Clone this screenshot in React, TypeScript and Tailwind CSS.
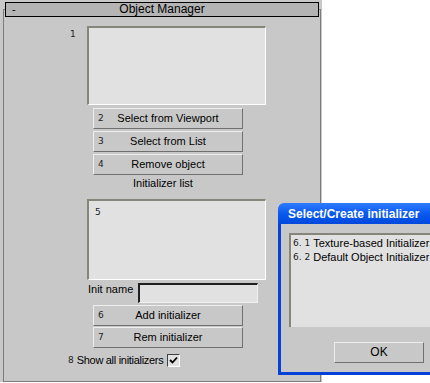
import React from 'react';

const btn =
  'relative flex h-[21px] w-[150px] items-center justify-center border border-t-[#eeeeee] border-l-[#eeeeee] border-b-[#707070] border-r-[#707070] bg-[#c8c8c8]';

function Mark({ children }: { children: React.ReactNode }) {
  return (
    <span className="font-['DejaVu_Sans',sans-serif] text-[9px] leading-none text-[#222]">
      {children}
    </span>
  );
}

function PanelButton({ num, label }: { num: string; label: string }) {
  return (
    <div className={`${btn} ml-[89px]`}>
      <span className="absolute left-[4px] top-0 flex h-full items-center">
        <Mark>{num}</Mark>
      </span>
      <span>{label}</span>
    </div>
  );
}

const listbox =
  'border-t-2 border-l-2 border-b border-r border-t-[#85857a] border-l-[#85857a] border-b-white border-r-white bg-[#e1e1e1]';

export default function App() {
  return (
    <div className="relative h-[383px] w-[430px] overflow-hidden bg-white font-['Liberation_Sans',Arial,sans-serif] text-[11px] leading-[13px] text-black">
      <div className="h-[382px] w-[322px] bg-[#c8c8c8] pl-[3px] pt-[9px]">
        <div className="flex h-[373px] w-[318px] flex-col border border-[#7c7c7c]">
          <div className="relative mx-[1px] -mt-[8px] flex h-[15px] items-center justify-center border border-black bg-[#b4b4b4]">
            <span className="absolute left-[6px] top-[0px]">-</span>
            <span className="text-[12px]">Object Manager</span>
          </div>

          <div className="ml-[66px] mt-[9px] flex">
            <div className="w-[17px] pt-[1px]">
              <Mark>1</Mark>
            </div>
            <div className={`${listbox} h-[79px] w-[179px]`} />
          </div>

          <div className="mt-[3px]">
            <PanelButton num="2" label="Select from Viewport" />
          </div>
          <div className="mt-[2px]">
            <PanelButton num="3" label="Select from List" />
          </div>
          <div className="mt-[2px]">
            <PanelButton num="4" label="Remove object" />
          </div>
          <div className="ml-[129px] mt-[2px]">Initializer list</div>

          <div className={`${listbox} ml-[83px] mt-[9px] h-[81px] w-[179px] pl-[6px] pt-[4px]`}>
            <Mark>5</Mark>
          </div>

          <div className="ml-[84px] mt-[3px] flex items-start">
            <span className="w-[50px]">Init name</span>
            <div className="h-[20px] w-[120px] border-t-2 border-l-2 border-b border-r border-t-[#202020] border-l-[#202020] border-b-[#f0f0f0] border-r-[#f0f0f0] bg-[#e1e1e1]" />
          </div>

          <div className="mt-[2px]">
            <PanelButton num="6" label="Add initializer" />
          </div>
          <div className="mt-[1px]">
            <PanelButton num="7" label="Rem initializer" />
          </div>

          <div className="ml-[64px] mt-[6px] flex items-center">
            <Mark>8</Mark>
            <span className="ml-[3px] tracking-[-0.3px]">Show all initializers</span>
            <div className="ml-[4px] flex h-[13px] w-[13px] items-center justify-center border-t border-l border-b border-r border-t-[#404040] border-l-[#404040] border-b-white border-r-white bg-[#e1e1e1]">
              <svg width="9" height="9" viewBox="0 0 9 9">
                <path d="M1 4 L3.5 6.5 L8 1.5" stroke="black" strokeWidth="1.8" fill="none" />
              </svg>
            </div>
          </div>
        </div>
      </div>

      <div className="absolute left-[278px] top-[203px] flex h-[172px] w-[170px] flex-col overflow-hidden rounded-tl-[6px]">
        <div className="flex h-[21px] items-center bg-gradient-to-b from-[#2f7bff] via-[#0a5af0] to-[#0048dc] pl-[10px] pt-[1px] text-[12px] font-bold text-white">
          Select/Create initializer
        </div>
        <div className="flex flex-1 flex-col border-b-[3px] border-l-[3px] border-[#0541d8] bg-[#c8c8c8]">
          <div className="ml-[8px] mt-[9px] h-[94px] border-t-2 border-l-2 border-t-[#85857a] border-l-[#85857a] bg-[#e1e1e1] pl-[2px] pt-[1px] text-[11px] leading-[14px]">
            <div className="flex items-center">
              <Mark>6. 1</Mark>
              <span className="ml-[3px]">Texture-based Initializer</span>
            </div>
            <div className="flex items-center">
              <Mark>6. 2</Mark>
              <span className="ml-[3px]">Default Object Initializer</span>
            </div>
          </div>
          <div className="ml-[53px] mt-[15px] flex h-[21px] w-[90px] items-center justify-center border border-t-[#eeeeee] border-l-[#eeeeee] border-b-[#707070] border-r-[#707070] text-[12px]">
            OK
          </div>
        </div>
      </div>
    </div>
  );
}
